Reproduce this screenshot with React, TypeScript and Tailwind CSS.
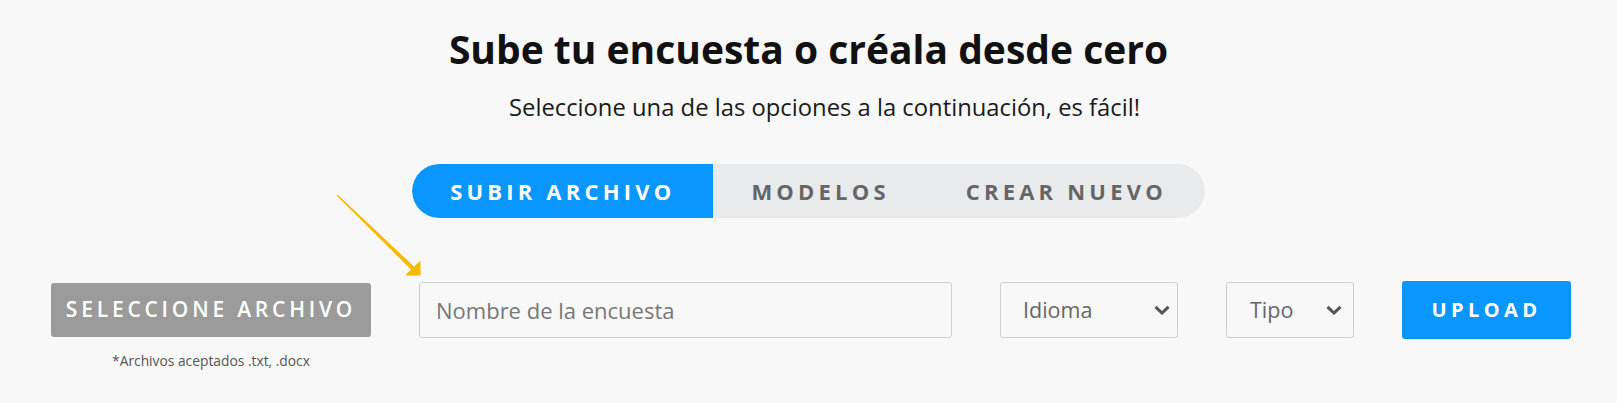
import React from "react";

const font = { fontFamily: "'Open Sans', 'Noto Sans', sans-serif" };

function Chevron() {
  return (
    <svg width="16" height="10" viewBox="0 0 16 10" className="shrink-0">
      <path d="M1.5 1.8 L8 8 L14.5 1.8" fill="none" stroke="#555" strokeWidth="3" strokeLinejoin="miter" />
    </svg>
  );
}

function Arrow() {
  return (
    <svg className="absolute left-0 top-0 pointer-events-none" width="1617" height="403" viewBox="0 0 1617 403">
      <polygon points="336.5,195.5 337.5,194.5 414.5,267 411.5,270" fill="#f6b800" />
      <polygon points="405,275.5 420.5,275.5 420.5,260.5" fill="#f6b800" />
    </svg>
  );
}

export default function App() {
  return (
    <div className="relative w-full min-h-[403px] bg-[#f8f8f8]" style={font}>
      <div className="flex flex-col items-center">
        <h1 className="pt-[22px] text-[39px] leading-[53px] font-bold text-[#111]">
          Sube tu encuesta o créala desde cero
        </h1>
        <p className="mt-[17px] pl-[32px] text-[23.8px] leading-[31px] text-[#1a1a1a]">
          Seleccione una de las opciones a la continuación, es fácil!
        </p>
        <div className="mt-[41px] flex h-[54px] items-stretch rounded-full bg-[#e9eaec] overflow-hidden">
          <div className="flex items-center px-[38px] bg-[#0996ff] rounded-l-full text-white text-[22px] font-bold tracking-[4.2px]">
            SUBIR ARCHIVO
          </div>
          <div className="flex items-center px-[38px] text-[#666] text-[22px] font-bold tracking-[4.2px]">
            MODELOS
          </div>
          <div className="flex items-center px-[38px] text-[#666] text-[22px] font-bold tracking-[4.2px]">
            CREAR NUEVO
          </div>
        </div>
      </div>

      <div className="mt-[63px] flex items-start gap-[48px] pl-[51px]">
        <div className="mt-[2px] flex w-[320px] flex-col items-center">
          <div className="flex h-[54px] w-full items-center justify-center rounded-[3px] bg-[#9b9b9b] text-white text-[21px] font-semibold tracking-[3.8px]">
            SELECCIONE ARCHIVO
          </div>
          <div className="mt-[15px] text-[13.8px] leading-[17px] text-[#555]">*Archivos aceptados .txt, .docx</div>
        </div>

        <div className="mt-[1px] flex h-[56px] w-[533px] items-center rounded-[3px] border border-[#cfcfcf] px-[16px] text-[22px] text-[#777]">
          Nombre de la encuesta
        </div>

        <div className="mt-[1px] flex h-[56px] w-[178px] items-center justify-between rounded-[3px] border border-[#cfcfcf] pl-[22px] pr-[7px] text-[21.5px] text-[#666]">
          <span>Idioma</span>
          <Chevron />
        </div>

        <div className="mt-[1px] flex h-[56px] w-[128px] items-center justify-between rounded-[3px] border border-[#cfcfcf] pl-[23px] pr-[11px] text-[21.5px] text-[#666]">
          <span>Tipo</span>
          <Chevron />
        </div>

        <div className="flex h-[58px] w-[169px] items-center justify-center rounded-[3px] bg-[#0996ff] text-white text-[20px] font-bold tracking-[4.4px]">
          UPLOAD
        </div>
      </div>

      <Arrow />
    </div>
  );
}
